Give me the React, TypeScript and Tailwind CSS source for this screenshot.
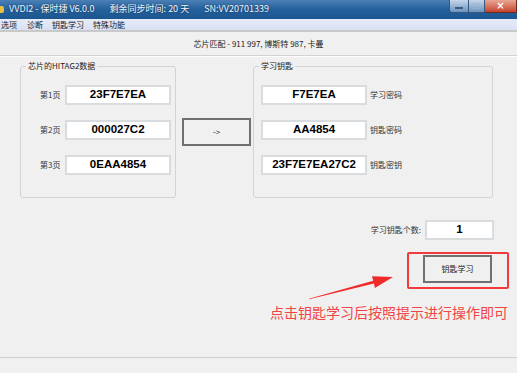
const cjk = "font-['Noto_Sans_CJK_SC','Noto_Sans',sans-serif]";
const hex = "font-['Liberation_Sans',Arial,sans-serif] font-bold text-[11.5px] text-black";

const chipPages = [
  { label: "第1页", value: "23F7E7EA" },
  { label: "第2页", value: "000027C2" },
  { label: "第3页", value: "0EAA4854" },
];

const learnedKey = [
  { label: "学习密码", value: "F7E7EA" },
  { label: "钥匙密码", value: "AA4854" },
  { label: "钥匙密钥", value: "23F7E7EA27C2" },
];

const menus = ["选项", "诊断", "钥匙学习", "特殊功能"];

function ValueBox({ value, width = "w-[106px]" }: { value: string; width?: string }) {
  return (
    <div
      className={`${width} h-[20px] flex items-center justify-center bg-white border-2 border-[#d9dcdf] ${hex}`}
    >
      {value}
    </div>
  );
}

function WinButton({ label }: { label: string }) {
  return (
    <div
      className={`w-[69px] h-[28px] flex items-center justify-center border-2 border-[#707070] bg-[#f0f0f0] text-[8px] text-[#222] ${cjk}`}
    >
      {label}
    </div>
  );
}

export default function App() {
  return (
    <div className={`relative w-[517px] h-[373px] overflow-hidden bg-[#f0f0f0] flex flex-col ${cjk}`}>
      {/* title bar */}
      <div className="h-[19px] flex items-start bg-gradient-to-b from-[#4a80b6] via-[#24609c] to-[#1c5690]">
        <div className="mt-[6px] w-[4px] h-[7px] bg-[#e8c040] rounded-r-[2px]" />
        <div className="mt-[3px] ml-[5px] flex text-[9px] leading-[12px] text-[#f2f6fb] [text-shadow:0_0_2px_#0c2d52]">
          <span>VVDI2 - 保时捷 V6.0.0</span>
          <span className="ml-[15px]">剩余同步时间: 20 天</span>
          <span className="ml-[15px]">SN:VV20701339</span>
        </div>
        <div className="ml-auto flex">
          <div className="w-[20px] h-[13px] flex items-center justify-center border border-[#34587f] border-t-0 rounded-bl-[3px] bg-gradient-to-b from-[#c7d7e9] to-[#6d93bf]">
            <div className="mt-[3px] w-[8px] h-[2px] bg-white border border-[#3b5c82]" />
          </div>
          <div className="w-[16px] h-[13px] flex items-center justify-center border border-[#34587f] border-t-0 border-l-0 bg-gradient-to-b from-[#c7d7e9] to-[#6d93bf]">
            <div className="w-[7px] h-[6px] border border-[#9fb4cc] opacity-70" />
          </div>
          <div className="w-[32px] h-[13px] flex items-center justify-center border border-[#6b2a1e] border-t-0 border-l-0 bg-gradient-to-b from-[#e9a595] to-[#c4412b] text-[10px] leading-none font-bold text-white font-['DejaVu_Sans',sans-serif]">
            ×
          </div>
        </div>
      </div>

      {/* menu bar */}
      <div className="h-[13px] flex items-center bg-gradient-to-b from-[#e6ebf7] to-[#d9e1f3] border-b-2 border-[#c9c9c9] text-[8px] leading-none text-[#1a1a1a]">
        {menus.map((m, i) => (
          <span key={m} className={i === 0 ? "ml-[1px] mr-[10px]" : "mr-[9px]"}>
            {m}
          </span>
        ))}
      </div>

      {/* header */}
      <div className="h-[24px] flex items-center justify-center text-[8px] text-[#222] border-b border-[#d2d2d2]">
        芯片匹配 - 911 997, 博斯特 987, 卡曼
      </div>
      <div className="h-px bg-white" />

      {/* groups */}
      <div className="mt-[3px] flex items-start">
        <fieldset className="ml-[20px] w-[156px] h-[138px] border border-[#d3d3d3] rounded-[3px]">
          <legend className="ml-[5px] px-[2px] text-[8px] leading-[12px] text-[#222]">芯片的HITAG2数据</legend>
          <div className="pt-[13px] pl-[19px] flex flex-col gap-[15px]">
            {chipPages.map((p) => (
              <div key={p.label} className="flex items-center">
                <span className="w-[25px] text-[8px] text-[#333]">{p.label}</span>
                <ValueBox value={p.value} />
              </div>
            ))}
          </div>
        </fieldset>

        <div className="ml-[6px] mt-[58px]">
          <WinButton label="->" />
        </div>

        <fieldset className="ml-[2px] w-[240px] h-[138px] border border-[#d3d3d3] rounded-[3px]">
          <legend className="ml-[5px] px-[2px] text-[8px] leading-[12px] text-[#222]">学习钥匙</legend>
          <div className="pt-[13px] pl-[7px] flex flex-col gap-[15px]">
            {learnedKey.map((k) => (
              <div key={k.label} className="flex items-center">
                <ValueBox value={k.value} />
                <span className="ml-[3px] text-[8px] text-[#333]">{k.label}</span>
              </div>
            ))}
          </div>
        </fieldset>
      </div>

      {/* key count */}
      <div className="mt-[22px] pr-[23px] flex items-center justify-end">
        <span className="mr-[4px] text-[8px] text-[#333]">学习钥匙个数:</span>
        <ValueBox value="1" width="w-[69px]" />
      </div>

      {/* learn button with annotation frame */}
      <div className="mt-[12px] pr-[8px] flex justify-end">
        <div className="border-2 border-[#f23a3a] rounded-[2px] pl-[14px] pr-[15px] pt-[1px] pb-[4px]">
          <WinButton label="钥匙学习" />
        </div>
      </div>

      <div className="mt-[15px] pr-[9px] text-right text-[14px] leading-[16px] text-[#f24444]">
        点击钥匙学习后按照提示进行操作即可
      </div>

      <div className="mt-auto mb-[15px] h-px bg-[#d0d0d0]" />

      {/* annotation arrow */}
      <svg
        className="absolute left-0 top-0 w-[517px] h-[373px] pointer-events-none"
        viewBox="0 0 517 373"
      >
        <polygon
          points="309.1,299.3 374.0,283.6 374.9,288 393,277 372,276.3 373.2,280.7 308.9,298.7"
          fill="#f02a2a"
        />
      </svg>
    </div>
  );
}
